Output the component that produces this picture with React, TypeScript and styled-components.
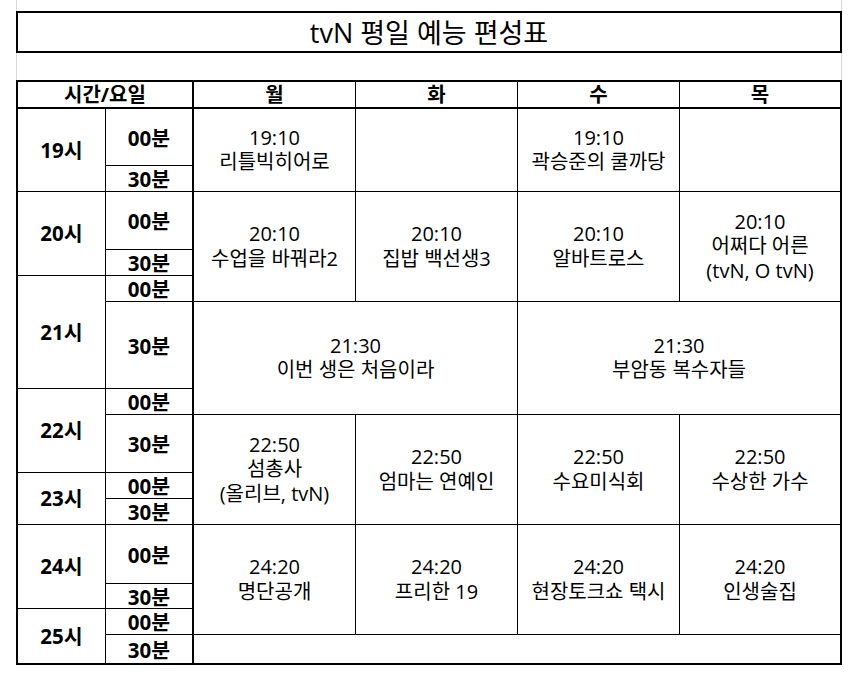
import React from 'react';
import styled, { createGlobalStyle } from 'styled-components';

const FONT = '"Open Sans", "Noto Sans CJK KR", sans-serif';
const GRID_GREY = '#d6d6d6';

const GlobalStyle = createGlobalStyle`
  html, body {
    margin: 0;
    padding: 0;
    background: #ffffff;
  }
  body {
    font-family: ${FONT};
    color: #000000;
  }
`;

const Page = styled.div`
  width: 826px;
  margin-left: 16px;
  display: flex;
  flex-direction: column;
`;

const BlankRow = styled.div<{ $height: number }>`
  height: ${p => p.$height}px;
  box-sizing: border-box;
  border-left: 1px solid ${GRID_GREY};
  border-right: 1px solid ${GRID_GREY};
`;

const TitleBox = styled.div`
  height: 42px;
  box-sizing: border-box;
  border: 2px solid #000;
  display: flex;
  align-items: center;
  justify-content: center;
  font-size: 27px;
  line-height: 1;
  padding-top: 1px;
`;

const Table = styled.div`
  display: grid;
  grid-template-columns: 87px 87px 161px 161px 161px 160px;
  grid-template-rows: 26px 56px 25px 57px 25px 25px 86px 25px 57px 25px 25px 58px 24px 25px 28px;
  gap: 1px;
  background: #000;
  border: 2px solid #000;
`;

const Cell = styled.div<{
  $row: number;
  $rowSpan?: number;
  $col: number;
  $colSpan?: number;
}>`
  grid-row: ${p => p.$row} / span ${p => p.$rowSpan ?? 1};
  grid-column: ${p => p.$col} / span ${p => p.$colSpan ?? 1};
  background: #fff;
  display: flex;
  align-items: center;
  justify-content: center;
  text-align: center;
  box-sizing: border-box;
  overflow: visible;
`;

const HeaderCell = styled(Cell)<{ $divider?: boolean }>`
  border-bottom: 1px solid #000;
  border-right: ${p => (p.$divider ? '1px solid #000' : 'none')};
  font-size: 20px;
  font-weight: 700;
  line-height: 1;
  padding-top: 1px;
`;

const HourCell = styled(Cell)`
  font-size: 20.5px;
  font-weight: 700;
  line-height: 1;
`;

const MinuteCell = styled(Cell)`
  border-right: 1px solid #000;
  font-size: 20.5px;
  font-weight: 700;
  line-height: 1;
  padding-top: 2px;
`;

const ShowCell = styled(Cell)`
  flex-direction: column;
  font-size: 20px;
  line-height: 24.5px;
`;

const ShowLine = styled.span`
  display: block;
  white-space: nowrap;
`;

interface Show {
  row: number;
  rowSpan: number;
  col: number;
  colSpan?: number;
  lines: string[];
}

const DAYS = ['월', '화', '수', '목'];

const HOURS = [
  { label: '19시', row: 2, span: 2 },
  { label: '20시', row: 4, span: 2 },
  { label: '21시', row: 6, span: 2 },
  { label: '22시', row: 8, span: 2 },
  { label: '23시', row: 10, span: 2 },
  { label: '24시', row: 12, span: 2 },
  { label: '25시', row: 14, span: 2 },
];

const SHOWS: Show[] = [
  { row: 2, rowSpan: 2, col: 3, lines: ['19:10', '리틀빅히어로'] },
  { row: 2, rowSpan: 2, col: 4, lines: [] },
  { row: 2, rowSpan: 2, col: 5, lines: ['19:10', '곽승준의 쿨까당'] },
  { row: 2, rowSpan: 2, col: 6, lines: [] },
  { row: 4, rowSpan: 3, col: 3, lines: ['20:10', '수업을 바꿔라2'] },
  { row: 4, rowSpan: 3, col: 4, lines: ['20:10', '집밥 백선생3'] },
  { row: 4, rowSpan: 3, col: 5, lines: ['20:10', '알바트로스'] },
  { row: 4, rowSpan: 3, col: 6, lines: ['20:10', '어쩌다 어른', '(tvN, O tvN)'] },
  { row: 7, rowSpan: 2, col: 3, colSpan: 2, lines: ['21:30', '이번 생은 처음이라'] },
  { row: 7, rowSpan: 2, col: 5, colSpan: 2, lines: ['21:30', '부암동 복수자들'] },
  { row: 9, rowSpan: 3, col: 3, lines: ['22:50', '섬총사', '(올리브, tvN)'] },
  { row: 9, rowSpan: 3, col: 4, lines: ['22:50', '엄마는 연예인'] },
  { row: 9, rowSpan: 3, col: 5, lines: ['22:50', '수요미식회'] },
  { row: 9, rowSpan: 3, col: 6, lines: ['22:50', '수상한 가수'] },
  { row: 12, rowSpan: 3, col: 3, lines: ['24:20', '명단공개'] },
  { row: 12, rowSpan: 3, col: 4, lines: ['24:20', '프리한 19'] },
  { row: 12, rowSpan: 3, col: 5, lines: ['24:20', '현장토크쇼 택시'] },
  { row: 12, rowSpan: 3, col: 6, lines: ['24:20', '인생술집'] },
  { row: 15, rowSpan: 1, col: 3, colSpan: 4, lines: [] },
];

const App: React.FC = () => {
  const minuteRows = Array.from({ length: 14 }, (_, i) => i + 2);

  return (
    <>
      <GlobalStyle />
      <Page>
        <BlankRow $height={11} />
        <TitleBox>tvN 평일 예능 편성표</TitleBox>
        <BlankRow $height={27} />
        <Table>
          <HeaderCell $row={1} $col={1} $colSpan={2} $divider>
            시간/요일
          </HeaderCell>
          {DAYS.map((day, i) => (
            <HeaderCell key={day} $row={1} $col={i + 3}>
              {day}
            </HeaderCell>
          ))}

          {HOURS.map(h => (
            <HourCell key={h.label} $row={h.row} $rowSpan={h.span} $col={1}>
              {h.label}
            </HourCell>
          ))}

          {minuteRows.map(row => (
            <MinuteCell key={row} $row={row} $col={2}>
              {row % 2 === 0 ? '00분' : '30분'}
            </MinuteCell>
          ))}

          {SHOWS.map(s => (
            <ShowCell
              key={`${s.row}-${s.col}`}
              $row={s.row}
              $rowSpan={s.rowSpan}
              $col={s.col}
              $colSpan={s.colSpan}
            >
              {s.lines.map(line => (
                <ShowLine key={line}>{line}</ShowLine>
              ))}
            </ShowCell>
          ))}
        </Table>
      </Page>
    </>
  );
};

export default App;
